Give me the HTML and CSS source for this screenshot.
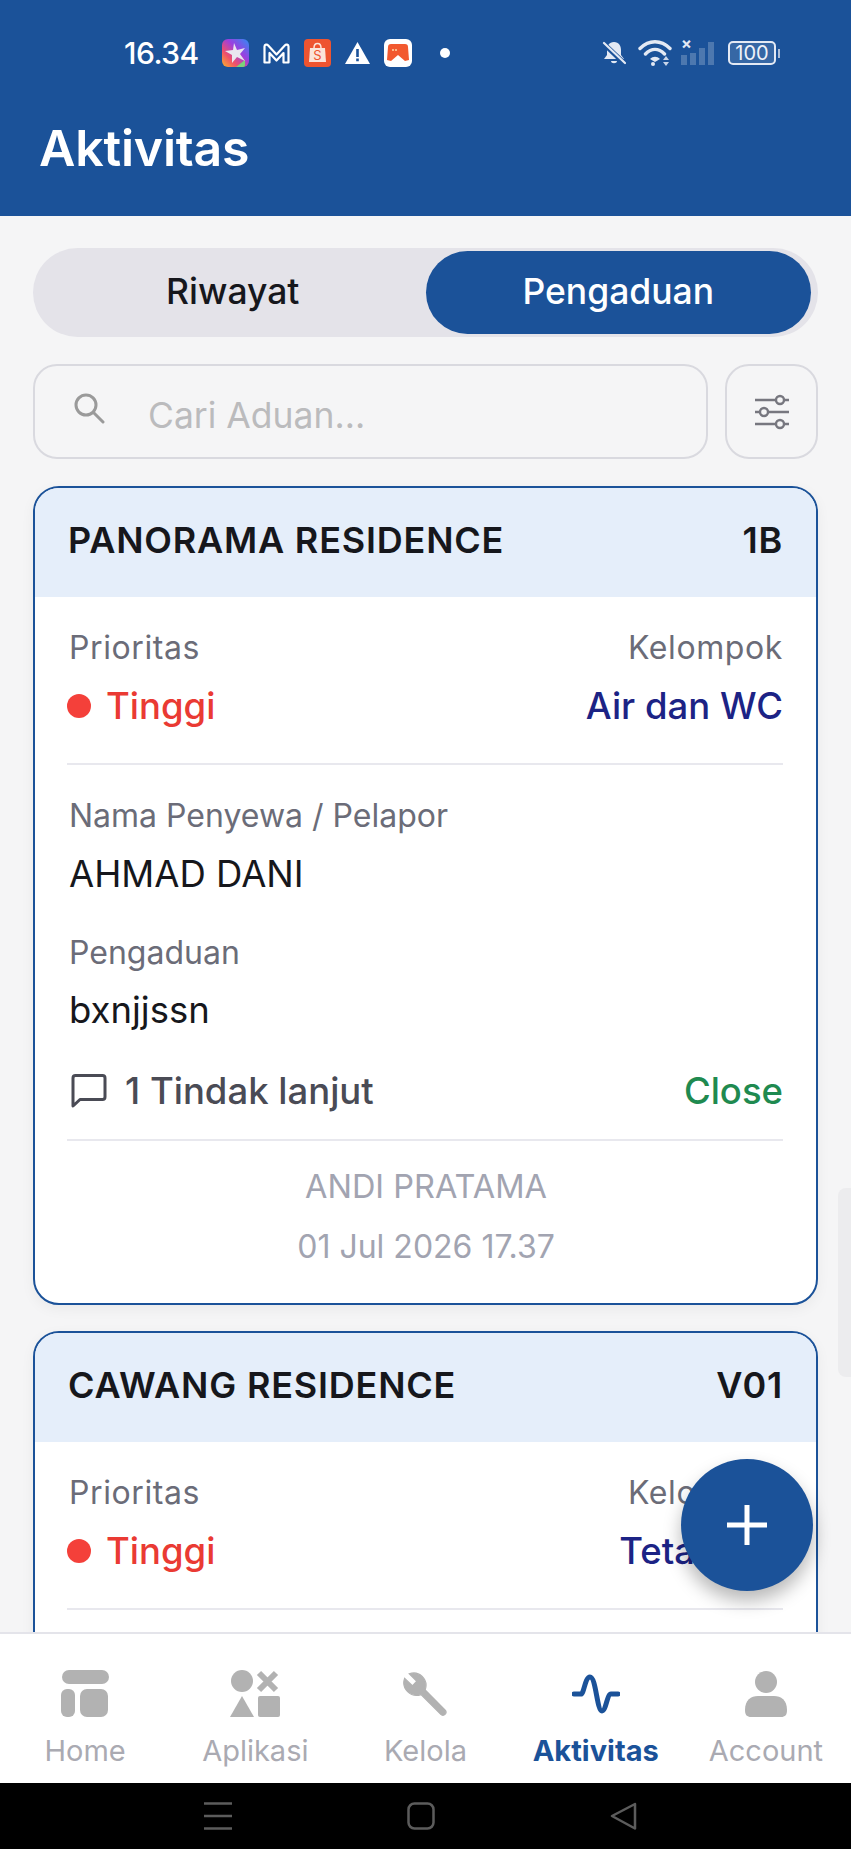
FILE: index.html
```html
<!DOCTYPE html>
<html lang="id">
  <head>
    <meta charset="UTF-8" />
    <meta name="viewport" content="width=device-width, initial-scale=1.0" />
    <title>Aktivitas</title>
    <link rel="stylesheet" href="styles.css">
  </head>
  <body>
    <div class="app">
      <header class="header">
        <div class="status">
          <div class="status-left">
            <span class="time">16.34</span>
            <svg class="ntf" width="27" height="28" viewBox="0 0 27 28">
              <defs>
                <linearGradient id="rainbow" x1="1" y1="0" x2="0" y2="1">
                  <stop offset="0" stop-color="#2f8cf5" />
                  <stop offset=".4" stop-color="#9a3fe0" />
                  <stop offset=".7" stop-color="#f0506a" />
                  <stop offset="1" stop-color="#f9b42a" />
                </linearGradient>
              </defs>
              <rect width="27" height="28" rx="6" fill="url(#rainbow)" />
              <path d="M23 21v5c0 1-1 2-2 2h-7z" fill="#7ad27a" />
              <path d="M12 4l3 7 8-2-5 6 5 7-8-4-5 6 0-8-7-4 8-1z" fill="#e9e6f0" />
            </svg>
            <svg class="ntf" width="27" height="21" viewBox="0 0 27 21">
              <path d="M1.500 19.500V3.500C1.500 1.500 4 1 5 2.300L13.500 11.500 22 2.300C23 1 25.500 1.500 25.500 3.500V19.500H20.500V10L13.500 17.500 6.500 10V19.500z" fill="none" stroke="#fff" stroke-width="2.200" stroke-linejoin="round" />
            </svg>
            <svg class="ntf" width="27" height="28" viewBox="0 0 27 28">
              <rect width="27" height="28" rx="4" fill="#ee5430" />
              <path d="M6 9h15l1 14H5z" fill="#fbe4da" />
              <path d="M10 9c0-6 7-6 7 0" fill="none" stroke="#fbe4da" stroke-width="1.500" />
              <text class="ntf-s" x="13.500" y="21">S</text>
            </svg>
            <svg class="ntf" width="25" height="22" viewBox="0 0 25 22">
              <path d="M12.500 0L25 22H0z" fill="#fff" />
              <path d="M11.200 7h2.600v8h-2.600zM11.200 16.500h2.600v2.800h-2.600z" fill="#1b5299" />
            </svg>
            <svg class="ntf" width="28" height="28" viewBox="0 0 28 28">
              <rect width="28" height="28" rx="6" fill="#fff" />
              <path d="M4 8c0-2 1-3 3-3h14c2 0 3 1 3 3l1 13-4 1-7-6-7 6-4-1z" fill="#f2592f" />
              <circle cx="9" cy="11" r="1" fill="#ffd9a8" />
              <circle cx="12" cy="11" r="1" fill="#ffd9a8" />
            </svg>
            <span class="dot"></span>
          </div>
          <div class="status-right">
            <svg width="24" height="24" viewBox="0 0 24 24">
              <path d="M12 1c5 0 7 4 7 8v5l3 4H2l3-4V9c0-4 2-8 7-8zM9 20h6c0 3-6 3-6 0z" fill="#e3e9f4" />
              <path d="M1 2l22 21" stroke="#1b5299" stroke-width="5" />
              <path d="M2 2l21 20" stroke="#e3e9f4" stroke-width="2.200" stroke-linecap="round" />
            </svg>
            <svg width="35" height="28" viewBox="0 0 35 28">
              <path d="M2 9.500C11 .5 23 .5 32 9.500M7.500 15C13.500 9 20.500 9 26.500 15" fill="none" stroke="#e3e9f4" stroke-width="3.400" stroke-linecap="round" />
              <path d="M12 20c3-3 7-3 10 0l-5 3z" fill="#e3e9f4" />
              <circle cx="15" cy="25" r="2" fill="#e3e9f4" />
              <path d="M28 17l3 4h-6zM25 23h6l-3 4z" fill="#c9d6ea" />
            </svg>
            <div class="signal">
              <span class="signal-x">×</span>
              <span class="bar bar-1"></span>
              <span class="bar bar-2"></span>
              <span class="bar bar-3"></span>
              <span class="bar bar-4"></span>
            </div>
            <div class="battery"><span class="battery-box">100</span><span class="battery-nub"></span></div>
          </div>
        </div>
        <h1 class="title">Aktivitas</h1>
      </header>

      <main class="main">
        <div class="toggle">
          <div class="toggle-item">Riwayat</div>
          <div class="toggle-item active">Pengaduan</div>
        </div>

        <div class="search-row">
          <div class="search">
            <svg class="search-icon" width="32" height="32" viewBox="0 0 32 32">
              <circle cx="13" cy="13" r="10" fill="none" stroke="#9a9a9a" stroke-width="3" />
              <path d="M20.500 20.500L30 30" stroke="#9a9a9a" stroke-width="3" stroke-linecap="round" />
            </svg>
            <span class="placeholder">Cari Aduan...</span>
          </div>
          <div class="filter">
            <svg width="34" height="36" viewBox="0 0 34 36">
              <g fill="none" stroke="#77777f" stroke-width="2.400">
                <path d="M0 6h21M29 6h5M0 18h5M13 18h21M0 30h21M29 30h5" />
                <circle cx="25" cy="6" r="4" />
                <circle cx="9" cy="18" r="4" />
                <circle cx="25" cy="30" r="4" />
              </g>
            </svg>
          </div>
        </div>

        <article class="card">
          <div class="card-head">
            <span>PANORAMA RESIDENCE</span>
            <span>1B</span>
          </div>
          <div class="card-body">
            <div class="meta">
              <div>
                <div class="label">Prioritas</div>
                <div class="value priority"><span class="priority-dot"></span>Tinggi</div>
              </div>
              <div class="meta-right">
                <div class="label">Kelompok</div>
                <div class="value group">Air dan WC</div>
              </div>
            </div>
            <div class="line"></div>
            <div class="label label-top">Nama Penyewa / Pelapor</div>
            <div class="text text-name">AHMAD DANI</div>
            <div class="label label-next">Pengaduan</div>
            <div class="text">bxnjjssn</div>
            <div class="follow">
              <div class="follow-left">
                <svg width="36" height="36" viewBox="0 0 36 36">
                  <path d="M2 33V5c0-1.500 1-2.500 2.500-2.500h27C33 2.500 34 3.500 34 5v19c0 1.500-1 2.500-2.500 2.500H9z" fill="none" stroke="#4a4b55" stroke-width="3" stroke-linejoin="round" />
                </svg>
                <span>1 Tindak lanjut</span>
              </div>
              <span class="close">Close</span>
            </div>
            <div class="line line-end"></div>
            <div class="foot foot-name">ANDI PRATAMA</div>
            <div class="foot foot-date">01 Jul 2026 17.37</div>
          </div>
        </article>

        <article class="card">
          <div class="card-head">
            <span>CAWANG RESIDENCE</span>
            <span>V01</span>
          </div>
          <div class="card-body card-body-open">
            <div class="meta">
              <div>
                <div class="label">Prioritas</div>
                <div class="value priority"><span class="priority-dot"></span>Tinggi</div>
              </div>
              <div class="meta-right">
                <div class="label">Kelompok</div>
                <div class="value group">Tetangga</div>
              </div>
            </div>
            <div class="line"></div>
          </div>
        </article>

        <div class="scroll-thumb"></div>
        <div class="fab">
          <svg width="42" height="42" viewBox="0 0 42 42">
            <path d="M21 1v40M1 21h40" stroke="#fff" stroke-width="5" />
          </svg>
        </div>
      </main>

      <nav class="nav">
        <div class="nav-item">
          <svg width="48" height="48" viewBox="0 0 48 48">
            <rect x="1" y="0" width="47" height="14" rx="7" />
            <rect x="0" y="19" width="14" height="28" rx="6" />
            <rect x="19" y="19" width="28" height="28" rx="7" />
          </svg>
          <span>Home</span>
        </div>
        <div class="nav-item">
          <svg width="50" height="48" viewBox="0 0 50 48">
            <circle cx="12" cy="11" r="11" />
            <path d="M29 3l17 17M46 3L29 20" class="nav-x" />
            <path d="M12 26l12 21H0z" />
            <rect x="28" y="26" width="22" height="21" rx="2" />
          </svg>
          <span>Aplikasi</span>
        </div>
        <div class="nav-item">
          <svg width="48" height="48" viewBox="0 0 24 24">
            <path class="nav-wrench" d="M21.500 20l-9.900-10c.8-2.300.4-4.900-1.500-6.800C8.300 1.500 5.900 1 3.600 1.900L7.400 5.600 5.200 7.900 1.300 4.200C.5 6.400 1 9 2.800 10.800c1.900 1.900 4.500 2.300 6.700 1.500l9.900 9.900c.6.600 1.500.6 2.100 0 .6-.6.600-1.600 0-2.200z" />
          </svg>
          <span>Kelola</span>
        </div>
        <div class="nav-item nav-active">
          <svg width="48" height="48" viewBox="0 0 48 48">
            <path d="M2 24H9C12 24 13 7 18 7C24 7 25 41 30 41C34 41 35 24 39 24H46" fill="none" stroke="#1b5299" stroke-width="5" stroke-linecap="round" />
          </svg>
          <span>Aktivitas</span>
        </div>
        <div class="nav-item">
          <svg width="42" height="48" viewBox="0 0 42 48">
            <circle cx="21" cy="12" r="11" />
            <path d="M0 40c0-10 6-14 13-14h16c7 0 13 4 13 14 0 5-2 7-6 7H6c-4 0-6-2-6-7z" />
          </svg>
          <span>Account</span>
        </div>
      </nav>

      <div class="system">
        <svg width="28" height="28" viewBox="0 0 28 28">
          <path d="M0 1.500h28M0 14h28M0 26.500h28" stroke="#5c5c5c" stroke-width="2.500" />
        </svg>
        <svg width="28" height="28" viewBox="0 0 28 28">
          <rect x="1.500" y="1.500" width="25" height="25" rx="6" fill="none" stroke="#5c5c5c" stroke-width="2.500" />
        </svg>
        <svg width="28" height="28" viewBox="0 0 28 28">
          <path d="M25 2L2 14l23 12.500z" fill="none" stroke="#5c5c5c" stroke-width="2.500" stroke-linejoin="round" />
        </svg>
      </div>
    </div>
  </body>
</html>
```

FILE: styles.css
```css
* {
  margin: 0;
  padding: 0;
  box-sizing: border-box;
}
html,
body {
  height: 100%;
  overflow: hidden;
}
body {
  font-family: Inter, "Liberation Sans", sans-serif;
  background: #f5f5f6;
}
.app {
  display: flex;
  flex-direction: column;
  width: 851px;
  height: 1849px;
}

/* header */
.header {
  flex: none;
  height: 216px;
  padding: 39px 71px 0 39px;
  background: #1b5299;
  color: #fff;
}
.status {
  display: flex;
  justify-content: space-between;
  align-items: center;
  height: 28px;
  padding-left: 85px;
}
.status-left,
.status-right {
  display: flex;
  align-items: center;
}
.time {
  margin-right: 23px;
  font-size: 30px;
  font-weight: 500;
  letter-spacing: -0.5px;
}
.ntf {
  margin-right: 14px;
}
.ntf-s {
  font-size: 13px;
  fill: #ee5430;
  text-anchor: middle;
}
.dot {
  width: 10px;
  height: 10px;
  margin-left: 14px;
  border-radius: 50%;
  background: #fff;
}
.status-right {
  gap: 12px;
}
.signal {
  position: relative;
  display: flex;
  align-items: flex-end;
  gap: 3px;
  width: 35px;
  height: 24px;
  margin-left: -4px;
}
.signal-x {
  position: absolute;
  left: 0;
  top: -6px;
  font-size: 16px;
  font-weight: 700;
  line-height: 16px;
  color: #e3e9f4;
}
.bar {
  width: 6px;
  background: rgba(255, 255, 255, 0.22);
}
.bar-1 {
  height: 10px;
}
.bar-2 {
  height: 12px;
}
.bar-3 {
  height: 17px;
}
.bar-4 {
  height: 23px;
}
.battery {
  display: flex;
  align-items: center;
  gap: 2px;
}
.battery-box {
  width: 48px;
  height: 24px;
  border: 2px solid #e3e9f4;
  border-radius: 5px;
  background: rgba(255, 255, 255, 0.12);
  font-size: 20px;
  line-height: 20px;
  text-align: center;
  color: #eef2f9;
}
.battery-nub {
  width: 2px;
  height: 9px;
  background: #aebfd9;
}
.title {
  margin-top: 53px;
  font-size: 50px;
  font-weight: 600;
  line-height: 56px;
  letter-spacing: -0.2px;
}

/* main */
.main {
  position: relative;
  flex: 1;
  min-height: 0;
  padding: 32px 33px 0;
  overflow: hidden;
}
.toggle {
  display: flex;
  height: 89px;
  padding: 3px 7px;
  border-radius: 45px;
  background: #e4e3e9;
}
.toggle-item {
  flex: 1;
  border-radius: 42px;
  font-size: 35.500px;
  font-weight: 500;
  line-height: 81px;
  text-align: center;
  color: #16171c;
}
.toggle-item.active {
  background: #1b5299;
  color: #fff;
}
.search-row {
  display: flex;
  gap: 17px;
  height: 95px;
  margin-top: 27px;
}
.search {
  flex: 1;
  display: flex;
  align-items: center;
  padding-left: 38px;
  border: 2px solid #d9d9df;
  border-radius: 24px;
}
.search-icon {
  margin-top: -8px;
}
.placeholder {
  margin: 8px 0 0 43px;
  font-size: 35.500px;
  color: #bbbbbd;
}
.filter {
  display: flex;
  justify-content: center;
  align-items: center;
  width: 93px;
  border: 2px solid #d9d9df;
  border-radius: 24px;
}
.card {
  margin-top: 27px;
  border: 2px solid #1b5299;
  border-radius: 26px;
  background: #fff;
  overflow: hidden;
  box-shadow: 0 4px 14px rgba(0, 0, 0, 0.05);
}
.card + .card {
  margin-top: 26px;
}
.card-head {
  display: flex;
  justify-content: space-between;
  align-items: center;
  height: 109px;
  padding: 0 33px 5px 33px;
  background: #e5eefa;
  font-size: 36px;
  font-weight: 600;
  letter-spacing: 0.8px;
  color: #16171c;
}
.card-body {
  padding: 31px 33px 36px 34px;
}
.card-body-open {
  padding-bottom: 80px;
}
.meta {
  display: flex;
  justify-content: space-between;
}
.meta-right {
  text-align: right;
}
.label {
  font-size: 32px;
  line-height: 40px;
  color: #6b6c78;
}
.meta .label {
  letter-spacing: 0.6px;
}
.value {
  margin-top: 16px;
  font-size: 36.500px;
  font-weight: 500;
  line-height: 44px;
}
.priority {
  display: flex;
  align-items: center;
  color: #ea3a33;
}
.priority-dot {
  width: 24px;
  height: 24px;
  margin: 0 15px 0 -2px;
  border-radius: 50%;
  background: #f4403a;
}
.group {
  color: #1c2385;
}
.line {
  height: 2px;
  margin: 35px 0 0 -2px;
  background: #e8e8ee;
}
.label-top {
  margin-top: 31px;
}
.label-next {
  margin-top: 37px;
}
.text {
  margin-top: 15px;
  font-size: 36.500px;
  line-height: 44px;
  color: #16171c;
}
.text-name {
  margin-top: 16px;
}
.follow {
  display: flex;
  justify-content: space-between;
  align-items: center;
  height: 44px;
  margin-top: 37px;
  font-size: 36.500px;
  font-weight: 500;
}
.follow-left {
  display: flex;
  align-items: center;
  gap: 18px;
  margin-left: 2px;
  color: #4a4b55;
}
.close {
  color: #1f8a50;
}
.line-end {
  margin-top: 26px;
}
.foot {
  font-size: 32.500px;
  line-height: 40px;
  text-align: center;
  color: #a2a4b1;
}
.foot-name {
  margin-top: 26px;
}
.foot-date {
  margin-top: 20px;
  font-size: 32px;
}
.scroll-thumb {
  position: absolute;
  right: 0;
  top: 972px;
  width: 13px;
  height: 189px;
  border-radius: 8px 0 0 8px;
  background: #ececee;
}
.fab {
  position: absolute;
  left: 681px;
  top: 1243px;
  display: flex;
  justify-content: center;
  align-items: center;
  width: 132px;
  height: 132px;
  border-radius: 50%;
  background: #1b5299;
  box-shadow: 0 10px 18px rgba(0, 0, 0, 0.28);
}

/* bottom nav */
.nav {
  position: relative;
  flex: none;
  display: flex;
  height: 151px;
  padding-top: 36px;
  border-top: 2px solid #e4e4ea;
  background: #fff;
}
.nav-item {
  flex: 1;
  display: flex;
  flex-direction: column;
  align-items: center;
  gap: 15px;
  font-size: 29px;
  line-height: 36px;
  color: #aaaab2;
}
.nav-item svg {
  fill: #b2b2b2;
}
.nav-x {
  fill: none;
  stroke: #b2b2b2;
  stroke-width: 6;
}
.nav-wrench {
  stroke: #b2b2b2;
  stroke-width: 0.6;
}
.nav-active {
  font-weight: 700;
  color: #1b5299;
}
.system {
  flex: none;
  display: flex;
  justify-content: center;
  align-items: center;
  gap: 175px;
  height: 66px;
  padding-right: 9px;
  background: #000;
}
```
